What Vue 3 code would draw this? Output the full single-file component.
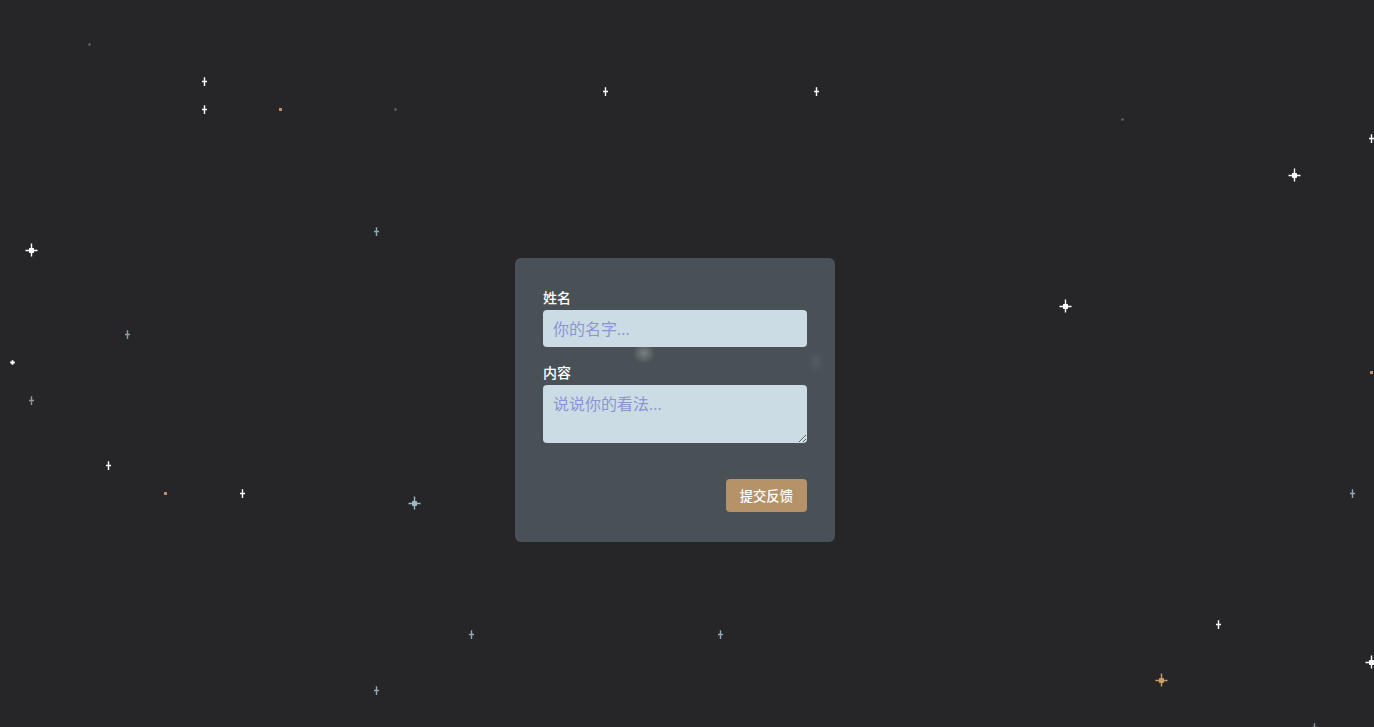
<script setup>
import { ref } from 'vue'

const name = ref('')
const content = ref('')

const stars = [
  { kind: 'large', x: 31, y: 250, color: '#ffffff' },
  { kind: 'large', x: 1294, y: 175, color: '#ffffff' },
  { kind: 'large', x: 1065, y: 306, color: '#ffffff' },
  { kind: 'large', x: 1371, y: 662, color: '#ffffff' },
  { kind: 'large', x: 414, y: 503, color: '#9db8c6' },
  { kind: 'large', x: 1161, y: 680, color: '#c59b67' },
  { kind: 'medium', x: 204, y: 81, color: '#ffffff' },
  { kind: 'medium', x: 204, y: 109, color: '#ffffff' },
  { kind: 'medium', x: 605, y: 91, color: '#ffffff' },
  { kind: 'medium', x: 816, y: 91, color: '#ffffff' },
  { kind: 'medium', x: 1371, y: 138, color: '#ffffff' },
  { kind: 'medium', x: 108, y: 465, color: '#ffffff' },
  { kind: 'medium', x: 242, y: 493, color: '#ffffff' },
  { kind: 'medium', x: 1218, y: 624, color: '#ffffff' },
  { kind: 'medium', x: 376, y: 231, color: '#8fa9b4' },
  { kind: 'medium', x: 127, y: 334, color: '#8c9ea5' },
  { kind: 'medium', x: 31, y: 400, color: '#929799' },
  { kind: 'medium', x: 471, y: 634, color: '#8fa9b4' },
  { kind: 'medium', x: 720, y: 634, color: '#8fa9b4' },
  { kind: 'medium', x: 376, y: 690, color: '#8fa9b4' },
  { kind: 'medium', x: 1352, y: 493, color: '#8fa9b4' },
  { kind: 'medium', x: 1314, y: 727, color: '#8195a2' },
  { kind: 'small', x: 12, y: 362, color: '#ffffff' },
  { kind: 'dot', x: 280, y: 109, color: '#bd8f6c' },
  { kind: 'dot', x: 165, y: 493, color: '#bd8f6c' },
  { kind: 'dot', x: 1371, y: 372, color: '#bd8f6c' },
  { kind: 'speck', x: 89, y: 44, color: '#68696a' },
  { kind: 'speck', x: 395, y: 109, color: '#68696a' },
  { kind: 'speck', x: 1122, y: 119, color: '#68696a' }
]

const shapes = {
  large: 'M-.2 -6.6h1.4v4.6h1.2l.6 .6v1.2h3.5v1.4h-3.5v1.2l-.6 .6h-1.2v3.6h-1.4v-3.6h-1.2l-.6 -.6v-1.2h-3.5v-1.4h3.5v-1.2l.6 -.6h1.2z',
  medium: 'M-.2 -3.8h1.4v3.6h1.8v1.4h-1.8v3.8h-1.4v-3.8h-1.8v-1.4h1.8z',
  small: 'M-.4 -1.8h1.8v1.4h1.4v1.8h-1.4v1.4h-1.8v-1.4h-1.4v-1.8h1.4z',
  dot: 'M-1 -1h3v3h-3z',
  speck: 'M-.6 -.6h2.2v2.2h-2.2z'
}
</script>

<template>
  <main class="sky">
    <svg class="stars" aria-hidden="true">
      <path
        v-for="(star, i) in stars"
        :key="i"
        :d="shapes[star.kind]"
        :fill="star.color"
        :transform="`translate(${star.x} ${star.y})`"
      />
    </svg>

    <form class="card" @submit.prevent>
      <span class="glow glow-bright" aria-hidden="true"></span>
      <span class="glow glow-faint" aria-hidden="true"></span>
      <div class="field">
        <label for="name">姓名</label>
        <input id="name" v-model="name" type="text" placeholder="你的名字..." />
      </div>
      <div class="field">
        <label for="content">内容</label>
        <textarea id="content" v-model="content" placeholder="说说你的看法..."></textarea>
      </div>
      <button type="submit">提交反馈</button>
    </form>
  </main>
</template>

<style>
body {
  background: #262628;
}
</style>

<style scoped>
.sky,
.sky * {
  box-sizing: border-box;
}

.sky {
  position: relative;
  display: flex;
  align-items: center;
  justify-content: center;
  min-height: 100vh;
  padding: 73px 24px 0 0;
  overflow: hidden;
  background: #262628;
  font-family: "Open Sans", "Noto Sans CJK SC", sans-serif;
}

.stars {
  position: absolute;
  inset: 0;
  width: 100%;
  height: 100%;
}

.card {
  position: relative;
  display: flex;
  flex-direction: column;
  gap: 16px;
  width: 320px;
  padding: 30px 28px;
  border-radius: 6px;
  background: #495056;
}

.glow {
  position: absolute;
  border-radius: 50%;
}

.glow-bright {
  top: 84px;
  left: 118px;
  width: 22px;
  height: 22px;
  background: radial-gradient(circle closest-side, #788082, #495056);
}

.glow-faint {
  top: 94px;
  left: 291px;
  width: 20px;
  height: 20px;
  background: radial-gradient(circle closest-side, #545b64, #495056);
}

.field {
  position: relative;
  display: flex;
  flex-direction: column;
  gap: 2px;
}

label {
  color: #ffffff;
  font-size: 14px;
  font-weight: 500;
  line-height: 20px;
}

input,
textarea {
  display: block;
  width: 100%;
  margin: 0;
  border: 0;
  border-radius: 4px;
  outline: 0;
  background: #cbdce4;
  color: #33384a;
  font-family: inherit;
  font-size: 16px;
  line-height: 21px;
}

input {
  height: 37px;
  padding: 8px 10px;
}

textarea {
  height: 58px;
  padding: 9px 10px;
  resize: both;
}

input::placeholder,
textarea::placeholder {
  color: #8f93d6;
  opacity: 1;
}

button {
  align-self: flex-end;
  height: 33px;
  margin-top: 20px;
  padding: 0 14px;
  border: 0;
  border-radius: 4px;
  background: #b59268;
  color: #ffffff;
  font-family: inherit;
  font-weight: 500;
  cursor: pointer;
}
</style>
